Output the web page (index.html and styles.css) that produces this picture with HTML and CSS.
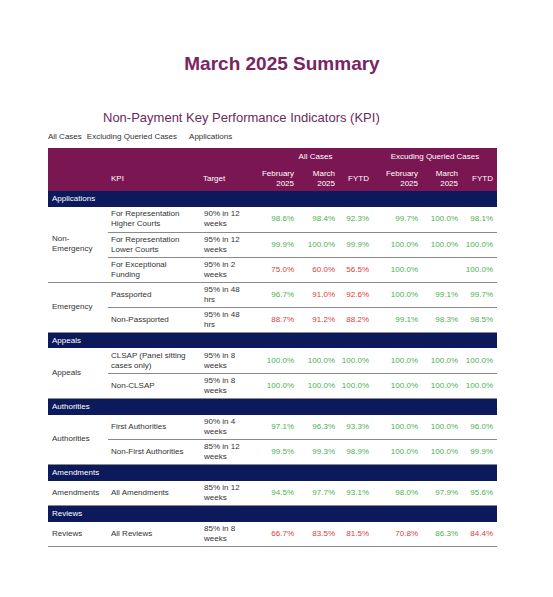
FILE: index.html
```html
<!DOCTYPE html>
<html lang="en">
  <head>
    <meta charset="UTF-8" />
    <meta name="viewport" content="width=device-width, initial-scale=1.0" />
    <title>March 2025 Summary</title>
    <link rel="stylesheet" href="styles.css">
  </head>
  <body>
    <h1 class="summary-title">March 2025 Summary</h1>

    <div class="report">
      <h2 class="report-title">Non-Payment Key Performance Indicators (KPI)</h2>

      <div class="report-tabs">
        <span>All Cases</span>
        <span>Excluding Queried Cases</span>
        <span class="tab-applications">Applications</span>
      </div>

      <table class="kpi-table">
        <colgroup>
          <col class="col-cat" />
          <col class="col-kpi" />
          <col class="col-target" />
          <col class="col-feb" />
          <col class="col-mar" />
          <col class="col-fytd" />
          <col class="col-feb2" />
          <col class="col-mar2" />
          <col class="col-fytd2" />
        </colgroup>
        <thead>
          <tr class="head-groups">
            <th colspan="3"></th>
            <th colspan="3" class="group-title">All Cases</th>
            <th colspan="3" class="group-title">Excuding Queried Cases</th>
          </tr>
          <tr class="head-cols">
            <th></th>
            <th class="text">KPI</th>
            <th class="text">Target</th>
            <th class="num">February 2025</th>
            <th class="num">March 2025</th>
            <th class="num">FYTD</th>
            <th class="num">February 2025</th>
            <th class="num">March 2025</th>
            <th class="num">FYTD</th>
          </tr>
        </thead>
        <tbody>
          <tr class="section"><td colspan="9">Applications</td></tr>
          <tr>
            <td class="cat" rowspan="3">Non-Emergency</td>
            <td class="kpi">For Representation Higher Courts</td>
            <td class="target">90% in 12 weeks</td>
            <td class="num good">98.6%</td>
            <td class="num good">98.4%</td>
            <td class="num good">92.3%</td>
            <td class="num good">99.7%</td>
            <td class="num good">100.0%</td>
            <td class="num good">98.1%</td>
          </tr>
          <tr>
            <td class="kpi">For Representation Lower Courts</td>
            <td class="target">95% in 12 weeks</td>
            <td class="num good">99.9%</td>
            <td class="num good">100.0%</td>
            <td class="num good">99.9%</td>
            <td class="num good">100.0%</td>
            <td class="num good">100.0%</td>
            <td class="num good">100.0%</td>
          </tr>
          <tr>
            <td class="kpi">For Exceptional Funding</td>
            <td class="target">95% in 2 weeks</td>
            <td class="num bad">75.0%</td>
            <td class="num bad">60.0%</td>
            <td class="num bad">56.5%</td>
            <td class="num good">100.0%</td>
            <td class="num"></td>
            <td class="num good">100.0%</td>
          </tr>
          <tr>
            <td class="cat" rowspan="2">Emergency</td>
            <td class="kpi">Passported</td>
            <td class="target">95% in 48 hrs</td>
            <td class="num good">96.7%</td>
            <td class="num bad">91.0%</td>
            <td class="num bad">92.6%</td>
            <td class="num good">100.0%</td>
            <td class="num good">99.1%</td>
            <td class="num good">99.7%</td>
          </tr>
          <tr>
            <td class="kpi">Non-Passported</td>
            <td class="target">95% in 48 hrs</td>
            <td class="num bad">88.7%</td>
            <td class="num bad">91.2%</td>
            <td class="num bad">88.2%</td>
            <td class="num good">99.1%</td>
            <td class="num good">98.3%</td>
            <td class="num good">98.5%</td>
          </tr>

          <tr class="section"><td colspan="9">Appeals</td></tr>
          <tr>
            <td class="cat" rowspan="2">Appeals</td>
            <td class="kpi">CLSAP (Panel sitting cases only)</td>
            <td class="target">95% in 8 weeks</td>
            <td class="num good">100.0%</td>
            <td class="num good">100.0%</td>
            <td class="num good">100.0%</td>
            <td class="num good">100.0%</td>
            <td class="num good">100.0%</td>
            <td class="num good">100.0%</td>
          </tr>
          <tr>
            <td class="kpi">Non-CLSAP</td>
            <td class="target">95% in 8 weeks</td>
            <td class="num good">100.0%</td>
            <td class="num good">100.0%</td>
            <td class="num good">100.0%</td>
            <td class="num good">100.0%</td>
            <td class="num good">100.0%</td>
            <td class="num good">100.0%</td>
          </tr>

          <tr class="section"><td colspan="9">Authorities</td></tr>
          <tr>
            <td class="cat" rowspan="2">Authorities</td>
            <td class="kpi">First Authorities</td>
            <td class="target">90% in 4 weeks</td>
            <td class="num good">97.1%</td>
            <td class="num good">96.3%</td>
            <td class="num good">93.3%</td>
            <td class="num good">100.0%</td>
            <td class="num good">100.0%</td>
            <td class="num good">96.0%</td>
          </tr>
          <tr>
            <td class="kpi">Non-First Authorities</td>
            <td class="target">85% in 12 weeks</td>
            <td class="num good">99.5%</td>
            <td class="num good">99.3%</td>
            <td class="num good">98.9%</td>
            <td class="num good">100.0%</td>
            <td class="num good">100.0%</td>
            <td class="num good">99.9%</td>
          </tr>

          <tr class="section"><td colspan="9">Amendments</td></tr>
          <tr>
            <td class="cat">Amendments</td>
            <td class="kpi">All Amendments</td>
            <td class="target">85% in 12 weeks</td>
            <td class="num good">94.5%</td>
            <td class="num good">97.7%</td>
            <td class="num good">93.1%</td>
            <td class="num good">98.0%</td>
            <td class="num good">97.9%</td>
            <td class="num good">95.6%</td>
          </tr>

          <tr class="section"><td colspan="9">Reviews</td></tr>
          <tr>
            <td class="cat">Reviews</td>
            <td class="kpi">All Reviews</td>
            <td class="target">85% in 8 weeks</td>
            <td class="num bad">66.7%</td>
            <td class="num bad">83.5%</td>
            <td class="num bad">81.5%</td>
            <td class="num bad">70.8%</td>
            <td class="num good">86.3%</td>
            <td class="num bad">84.4%</td>
          </tr>
        </tbody>
      </table>
    </div>
  </body>
</html>
```

FILE: styles.css
```css
/* Reset */
* {
  box-sizing: border-box;
}

body {
  margin: 0;
  background: #fff;
  color: #333;
  font-family: "Liberation Sans", Arial, sans-serif;
}

/* Titles */
.summary-title {
  margin: 0;
  padding: 53px 0 0 11px;
  text-align: center;
  font-size: 19px;
  line-height: 22px;
  font-weight: 700;
  color: #7a2461;
}

.report {
  padding-left: 48px;
}

.report-title {
  margin: 35px 0 0;
  padding-left: 55px;
  font-size: 13px;
  line-height: 15px;
  font-weight: 400;
  color: #6b2b5e;
}

.report-tabs {
  display: flex;
  gap: 5px;
  margin-top: 7px;
  font-size: 8px;
  line-height: 10px;
  color: #333;
}

.report-tabs .tab-applications {
  margin-left: 7px;
}

/* KPI table */
.kpi-table {
  margin-top: 6px;
  width: 449px;
  table-layout: fixed;
  border-collapse: collapse;
  font-size: 8px;
  line-height: 10px;
}

.col-cat { width: 60px; }
.col-kpi { width: 92px; }
.col-target { width: 58px; }
.col-feb { width: 40px; }
.col-mar { width: 41px; }
.col-fytd { width: 34px; }
.col-feb2 { width: 49px; }
.col-mar2 { width: 40px; }
.col-fytd2 { width: 35px; }

.kpi-table th {
  padding: 0;
  background: #7a1652;
  color: #fff;
  font-weight: 400;
  vertical-align: middle;
}

.head-groups th {
  height: 18px;
}

.head-cols th {
  height: 25px;
}

.kpi-table th.group-title {
  text-align: center;
}

.kpi-table th.text {
  text-align: left;
  padding-left: 3px;
}

.kpi-table .num {
  text-align: right;
  padding-right: 4px;
}

.kpi-table td {
  padding: 0 4px;
  height: 25px;
  vertical-align: middle;
  border-bottom: 1px solid #8a8a8a;
}

.kpi-table td.kpi {
  padding: 0 8px 0 3px;
}

.kpi-table td.target {
  padding: 0 12px 0 4px;
}

.kpi-table td.num {
  padding: 0 4px 0 0;
}

.kpi-table .section td {
  height: 16.2px;
  padding: 0 4px;
  background: #0c1a5b;
  color: #fff;
  border-bottom: 0;
}

.good {
  color: #4caf50;
}

.bad {
  color: #e03a3a;
}
```
